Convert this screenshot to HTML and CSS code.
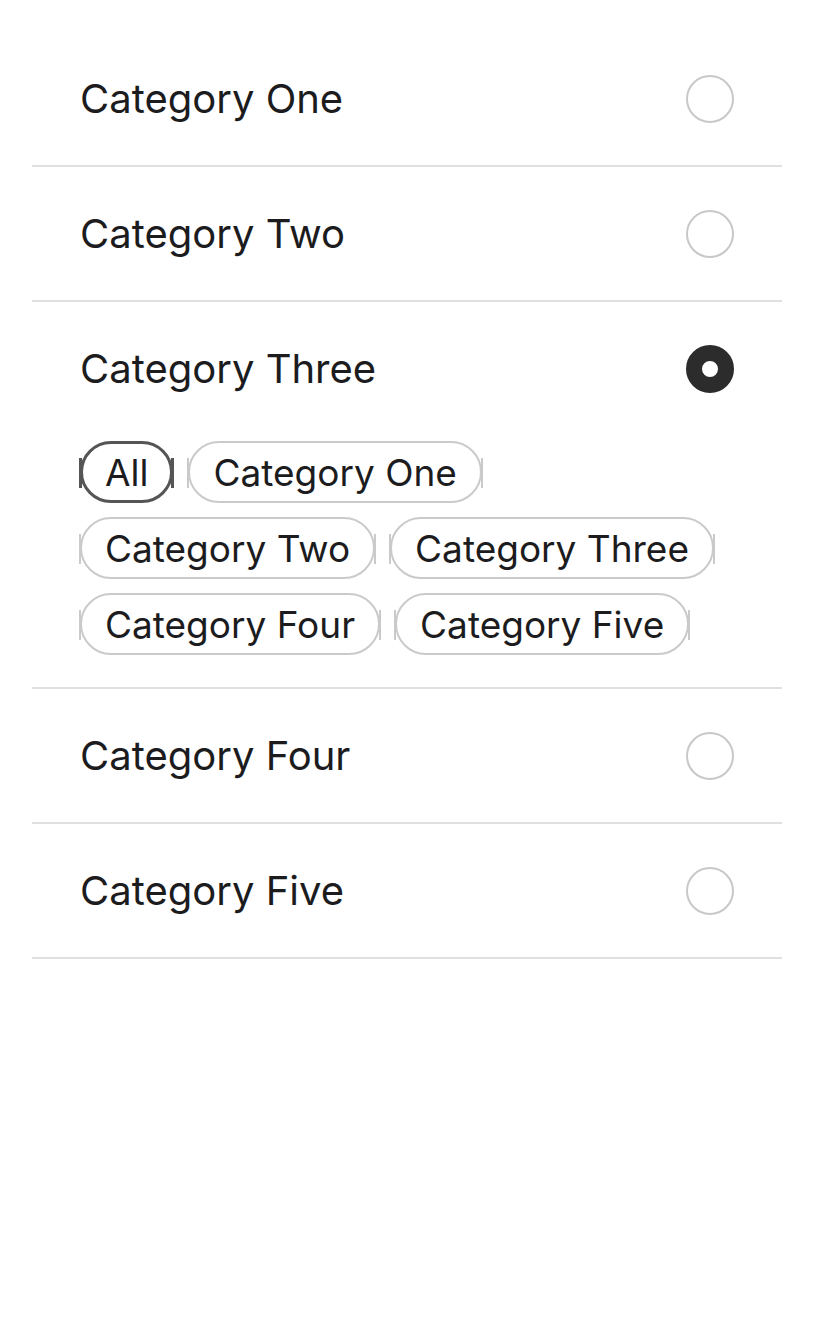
FILE: index.html
```html
<!DOCTYPE html>
<html lang="en">
<head>
<meta charset="utf-8">
<title>Categories</title>
<link rel="stylesheet" href="styles.css">
</head>
<body>
<div class="list">
  <div class="row">
    <div class="row-head"><span class="label">Category One</span><span class="radio"></span></div>
  </div>
  <div class="row">
    <div class="row-head"><span class="label">Category Two</span><span class="radio"></span></div>
  </div>
  <div class="row">
    <div class="row-head"><span class="label">Category Three</span><span class="radio radio-on"></span></div>
    <div class="chips">
      <span class="chip chip-on">All</span>
      <span class="chip">Category One</span>
      <span class="chip">Category Two</span>
      <span class="chip">Category Three</span>
      <span class="chip">Category Four</span>
      <span class="chip">Category Five</span>
    </div>
  </div>
  <div class="row">
    <div class="row-head"><span class="label">Category Four</span><span class="radio"></span></div>
  </div>
  <div class="row">
    <div class="row-head"><span class="label">Category Five</span><span class="radio"></span></div>
  </div>
</div>
</body>
</html>
```
FILE: styles.css
```css
html, body {
  margin: 0;
  padding: 0;
  background: #ffffff;
}
body {
  font-family: Inter, "Noto Sans", sans-serif;
  color: #1c1c1e;
  padding: 32px 32px 0 32px;
}
.list {
  display: flex;
  flex-direction: column;
}
.row {
  border-bottom: 2px solid #e0e0e0;
}
.row-head {
  height: 133px;
  display: flex;
  align-items: center;
  justify-content: space-between;
  padding: 0 48px 0 48px;
}
.label {
  font-size: 40px;
  letter-spacing: 0;
}
.radio {
  width: 44px;
  height: 44px;
  border: 2px solid #c8c8c8;
  border-radius: 50%;
  box-sizing: content-box;
}
.radio-on {
  width: 16px;
  height: 16px;
  border: 16px solid #2c2c2c;
  background: #ffffff;
}
.chips {
  display: flex;
  flex-wrap: wrap;
  column-gap: 15px;
  row-gap: 14px;
  padding: 6px 48px 32px 48px;
}
.chip {
  position: relative;
  height: 58px;
  display: inline-flex;
  align-items: center;
  padding: 0 23px;
  border: 2px solid #cacaca;
  border-radius: 31px;
  font-size: 37px;
  letter-spacing: 0;
}
.chip::before,
.chip::after {
  content: "";
  position: absolute;
  top: 15px;
  width: 2px;
  height: 30px;
  background: #cacaca;
}
.chip::before { left: -3px; }
.chip::after { right: -3px; }
.chip-on {
  border: 3px solid #555555;
  height: 56px;
  padding: 0 22px;
}
.chip-on::before,
.chip-on::after {
  width: 3px;
  top: 14px;
  background: #555555;
}
.chip-on::before { left: -4px; }
.chip-on::after { right: -4px; }
```
